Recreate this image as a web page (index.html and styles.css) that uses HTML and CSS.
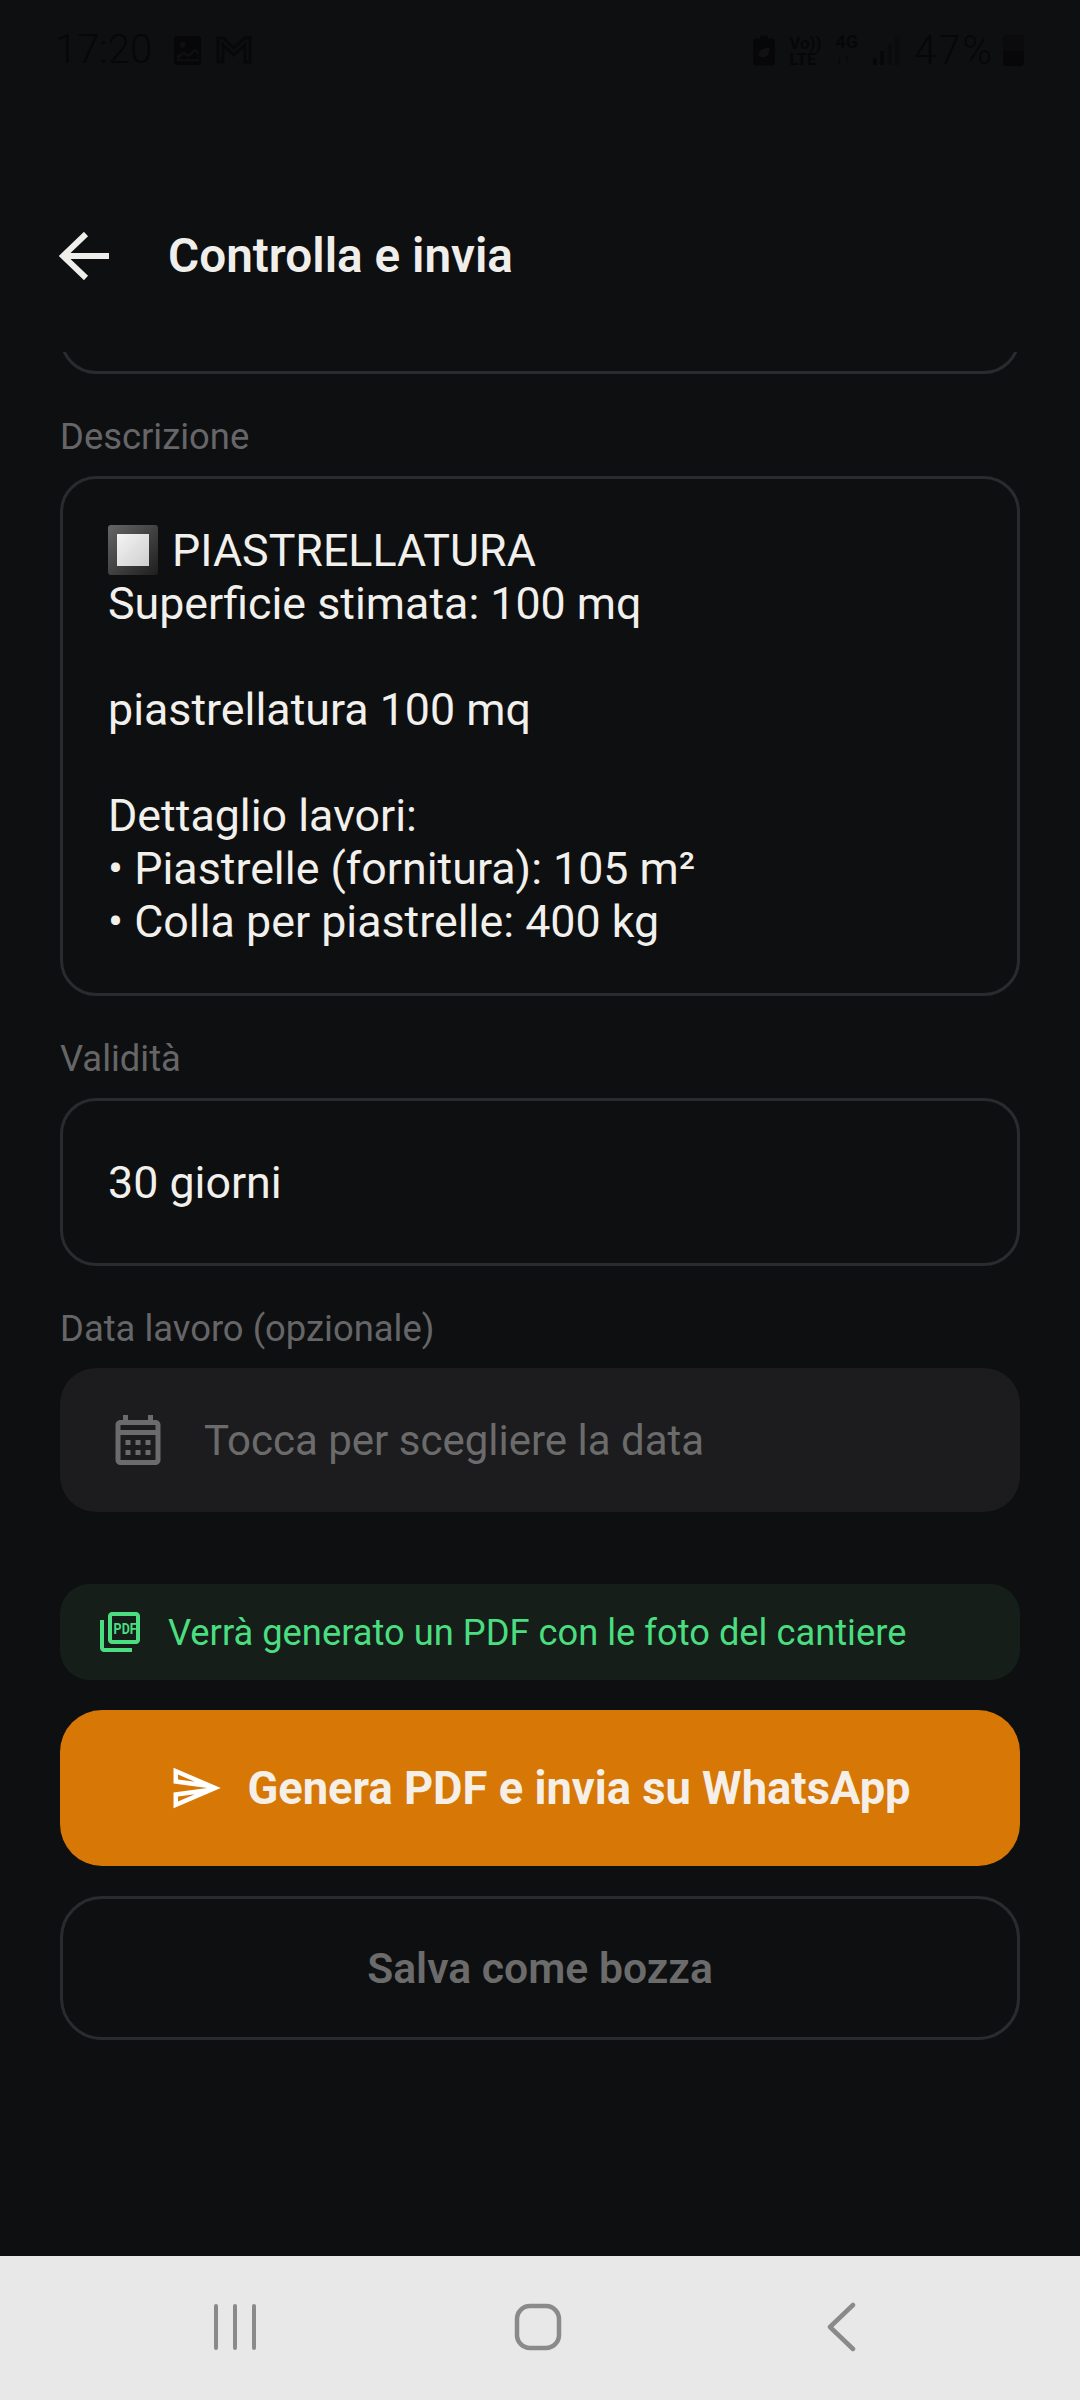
FILE: index.html
```html
<!DOCTYPE html>
<html lang="it">
<head>
    <meta charset="UTF-8">
    <meta name="viewport" content="width=device-width, initial-scale=1.0">
    <title>Controlla e invia</title>
    <link rel="stylesheet" href="styles.css">
</head>
<body>
    <div class="phone">

        <div class="status-bar">
            <div class="status-group">
                <span class="time">17:20</span>
                <svg class="st-photo" width="31" height="31" viewBox="0 0 32 32"><path d="M6 1h20a4 4 0 0 1 4 4v22a4 4 0 0 1-4 4H6a4 4 0 0 1-4-4V5a4 4 0 0 1 4-4z" fill="#070709"/><circle cx="11" cy="10" r="3" fill="#0e0f11"/><path d="M5 27v-6l7-4 5 3 7-6 4 4v9z" fill="#0e0f11"/><path d="M7 25l5-5 5 3 7-6 3 3v5z" fill="#070709"/></svg>
                <svg class="st-mail" width="36" height="28" viewBox="0 0 36 28"><path d="M2 26V2h5l11 10L29 2h5v24h-5V9l-11 10L7 9v17z" fill="none" stroke="#08080a" stroke-width="3"/></svg>
            </div>
            <div class="status-group status-right">
                <svg width="22" height="31" viewBox="0 0 24 32"><path d="M8 0h8v3h5a3 3 0 0 1 3 3v23a3 3 0 0 1-3 3H3a3 3 0 0 1-3-3V6a3 3 0 0 1 3-3h5z" fill="#070709"/><path d="M6 22c0-6 5-9 12-9 0 7-3 11-9 10" fill="#101113"/></svg>
                <span class="volte">Vo))<br>LTE</span>
                <span class="net">4G<br><small>↓↑</small></span>
                <svg width="28" height="30" viewBox="0 0 30 32"><rect x="1" y="24" width="4" height="7" fill="#070709"/><rect x="9" y="16" width="4" height="15" fill="#08080a"/><rect x="17" y="9" width="4" height="22" fill="#0b0b0d"/><rect x="25" y="1" width="4" height="30" fill="#0b0b0d"/></svg>
                <span class="battery-pct">47%</span>
                <div class="battery"><div class="battery-fill"></div></div>
            </div>
        </div>

        <header class="app-bar">
            <svg class="back-icon" width="50" height="48" viewBox="0 0 50 48"><path d="M50 24H5M27 2L4 24l23 22" fill="none" stroke="#f0eeea" stroke-width="6"/></svg>
            <h1>Controlla e invia</h1>
        </header>

        <main class="content">
            <div class="field-box clipped-box"></div>

            <label class="field-label">Descrizione</label>
            <div class="field-box desc-box">
                <div class="desc-line"><span class="square-emoji"><span class="square-inner"></span></span> PIASTRELLATURA</div>
                <div class="desc-line">Superficie stimata: 100 mq</div>
                <div class="desc-line">&nbsp;</div>
                <div class="desc-line">piastrellatura 100 mq</div>
                <div class="desc-line">&nbsp;</div>
                <div class="desc-line">Dettaglio lavori:</div>
                <div class="desc-line">• Piastrelle (fornitura): 105 m²</div>
                <div class="desc-line">• Colla per piastrelle: 400 kg</div>
            </div>

            <label class="field-label">Validità</label>
            <div class="field-box value-box">30 giorni</div>

            <label class="field-label">Data lavoro (opzionale)</label>
            <div class="date-box">
                <svg width="60" height="60" viewBox="0 0 24 24" fill="#6b6b6b"><path d="M19 4h-1V2h-2v2H8V2H6v2H5c-1.11 0-1.99.9-1.99 2L3 20c0 1.1.89 2 2 2h14c1.1 0 2-.9 2-2V6c0-1.1-.9-2-2-2zm0 16H5V10h14v10zm0-12H5V6h14v2zM9 14H7v-2h2v2zm4 0h-2v-2h2v2zm4 0h-2v-2h2v2zm-8 4H7v-2h2v2zm4 0h-2v-2h2v2zm4 0h-2v-2h2v2z"/></svg>
                <span>Tocca per scegliere la data</span>
            </div>

            <div class="pdf-note">
                <svg width="48" height="48" viewBox="0 0 24 24" fill="#4ade80"><path d="M20 2H8c-1.1 0-2 .9-2 2v12c0 1.1.9 2 2 2h12c1.1 0 2-.9 2-2V4c0-1.100-.9-2-2-2zm0 14H8V4h12v12zM4 6H2v14c0 1.100.9 2 2 2h14v-2H4V6z"/><text x="8.800" y="13" textLength="11.500" lengthAdjust="spacingAndGlyphs" class="pdf-text">PDF</text></svg>
                <span>Verrà generato un PDF con le foto del cantiere</span>
            </div>

            <button class="btn-primary">
                <svg width="54" height="54" viewBox="0 0 24 24" fill="#fff"><path d="M4.010 6.030l7.510 3.220-7.520-1 .01-2.220m7.500 8.720L4 17.970v-2.220l7.510-1M2.010 3L2 10l15 2-15 2 .01 7L23 12 2.010 3z"/></svg>
                <span>Genera PDF e invia su WhatsApp</span>
            </button>

            <button class="btn-draft">Salva come bozza</button>
        </main>

        <nav class="nav-bar">
            <div class="nav-item">
                <svg width="46" height="50" viewBox="0 0 46 50"><path d="M4 4v42M23 4v42M42 4v42" fill="none" stroke="#8a8a8a" stroke-width="4" stroke-linecap="round"/></svg>
            </div>
            <div class="nav-item">
                <svg width="48" height="48" viewBox="0 0 48 48"><rect x="3" y="3" width="42" height="42" rx="13" fill="none" stroke="#8a8a8a" stroke-width="4.500"/></svg>
            </div>
            <div class="nav-item">
                <svg width="30" height="50" viewBox="0 0 30 50"><path d="M27 3L4 25l23 22" fill="none" stroke="#8a8a8a" stroke-width="4.500" stroke-linecap="round" stroke-linejoin="round"/></svg>
            </div>
        </nav>

    </div>
</body>
</html>
```

FILE: styles.css
```css
* {
    box-sizing: border-box;
}

html, body {
    margin: 0;
    padding: 0;
    background: #0e0f11;
}

body {
    font-family: 'Roboto', sans-serif;
    color: #f2f0ec;
}

.phone {
    width: 1080px;
    height: 2400px;
    display: flex;
    flex-direction: column;
    overflow: hidden;
}

/* status bar is nearly the same colour as the page in the screenshot */
.status-bar {
    height: 100px;
    padding: 34px 56px 0 55px;
    display: flex;
    justify-content: space-between;
    align-items: flex-start;
    color: #070709;
    flex-shrink: 0;
}

.status-group {
    display: flex;
    align-items: center;
}

.st-photo {
    margin-left: 20px;
}

.st-mail {
    margin-left: 13px;
}

.status-right {
    gap: 14px;
}

.time,
.battery-pct {
    font-size: 40px;
    font-weight: 300;
    line-height: 32px;
}

.battery-pct {
    letter-spacing: 2px;
}

.volte {
    font-size: 17px;
    font-weight: 700;
    line-height: 16px;
}

.net {
    font-size: 18px;
    font-weight: 700;
    line-height: 16px;
}

.net small {
    font-size: 15px;
    font-weight: 400;
}

.battery {
    width: 21px;
    height: 31px;
    background: #0b0b0d;
    border-radius: 4px;
    display: flex;
    align-items: flex-end;
    overflow: hidden;
    margin-left: -5px;
}

.battery-fill {
    width: 100%;
    height: 47%;
    background: #070709;
}

.app-bar {
    height: 252px;
    padding: 60px 0 0 59px;
    display: flex;
    align-items: center;
    flex-shrink: 0;
}

.back-icon {
    flex-shrink: 0;
}

.app-bar h1 {
    margin: 0 0 0 59px;
    font-size: 47.700px;
    font-weight: 600;
    color: #f0eeea;
}

.content {
    flex: 1;
    overflow: hidden;
    padding: 0 60px;
    display: flex;
    flex-direction: column;
}

.field-box {
    border: 3px solid #2b2b2f;
    border-radius: 36px;
    flex-shrink: 0;
}

.clipped-box {
    height: 168px;
    margin-top: -146px;
}

.field-label {
    display: block;
    margin-top: 41px;
    margin-bottom: 17px;
    font-size: 36.400px;
    line-height: 44px;
    color: #666668;
}

.desc-box {
    height: 520px;
    padding: 45px 45px 0;
    font-size: 44.750px;
    line-height: 53px;
}

.desc-line {
    height: 53px;
    white-space: nowrap;
}

.square-emoji {
    display: inline-block;
    width: 50px;
    height: 50px;
    margin-right: 3px;
    vertical-align: -9px;
    padding: 9px;
    background: linear-gradient(135deg, #666666, #1e1e1e);
    border-radius: 3px;
}

.square-inner {
    display: block;
    width: 100%;
    height: 100%;
    background: linear-gradient(135deg, #f4f4f4, #cfcfcf);
}

.value-box {
    height: 168px;
    padding: 0 45px;
    display: flex;
    align-items: center;
    font-size: 44.750px;
}

.date-box {
    height: 144px;
    padding: 0 48px;
    background: #1c1c1e;
    border-radius: 36px;
    display: flex;
    align-items: center;
    gap: 36px;
    font-size: 42px;
    color: #6b6b6b;
    flex-shrink: 0;
}

.pdf-note {
    height: 96px;
    margin-top: 72px;
    padding: 0 36px;
    background: #151e19;
    border-radius: 30px;
    display: flex;
    align-items: center;
    gap: 24px;
    font-size: 36.300px;
    color: #4ade80;
    flex-shrink: 0;
}

.pdf-text {
    font-family: 'Roboto', sans-serif;
    font-size: 7px;
    font-weight: 700;
}

.btn-primary {
    height: 156px;
    margin-top: 30px;
    border: none;
    border-radius: 42px;
    background: #d77706;
    color: #f5efe8;
    font-family: 'Roboto', sans-serif;
    font-size: 45.300px;
    font-weight: 700;
    display: flex;
    align-items: center;
    justify-content: center;
    gap: 24px;
    flex-shrink: 0;
}

.btn-draft {
    height: 144px;
    margin-top: 30px;
    border: 3px solid #2b2b2f;
    border-radius: 42px;
    background: none;
    color: #6b6b6b;
    font-family: 'Roboto', sans-serif;
    font-size: 42.700px;
    font-weight: 600;
    flex-shrink: 0;
}

.nav-bar {
    height: 144px;
    background: #e8e8e8;
    display: flex;
    justify-content: center;
    align-items: center;
    padding: 0 5px 3px 0;
    flex-shrink: 0;
}

.nav-item {
    width: 303px;
    display: flex;
    justify-content: center;
    align-items: center;
}
```
